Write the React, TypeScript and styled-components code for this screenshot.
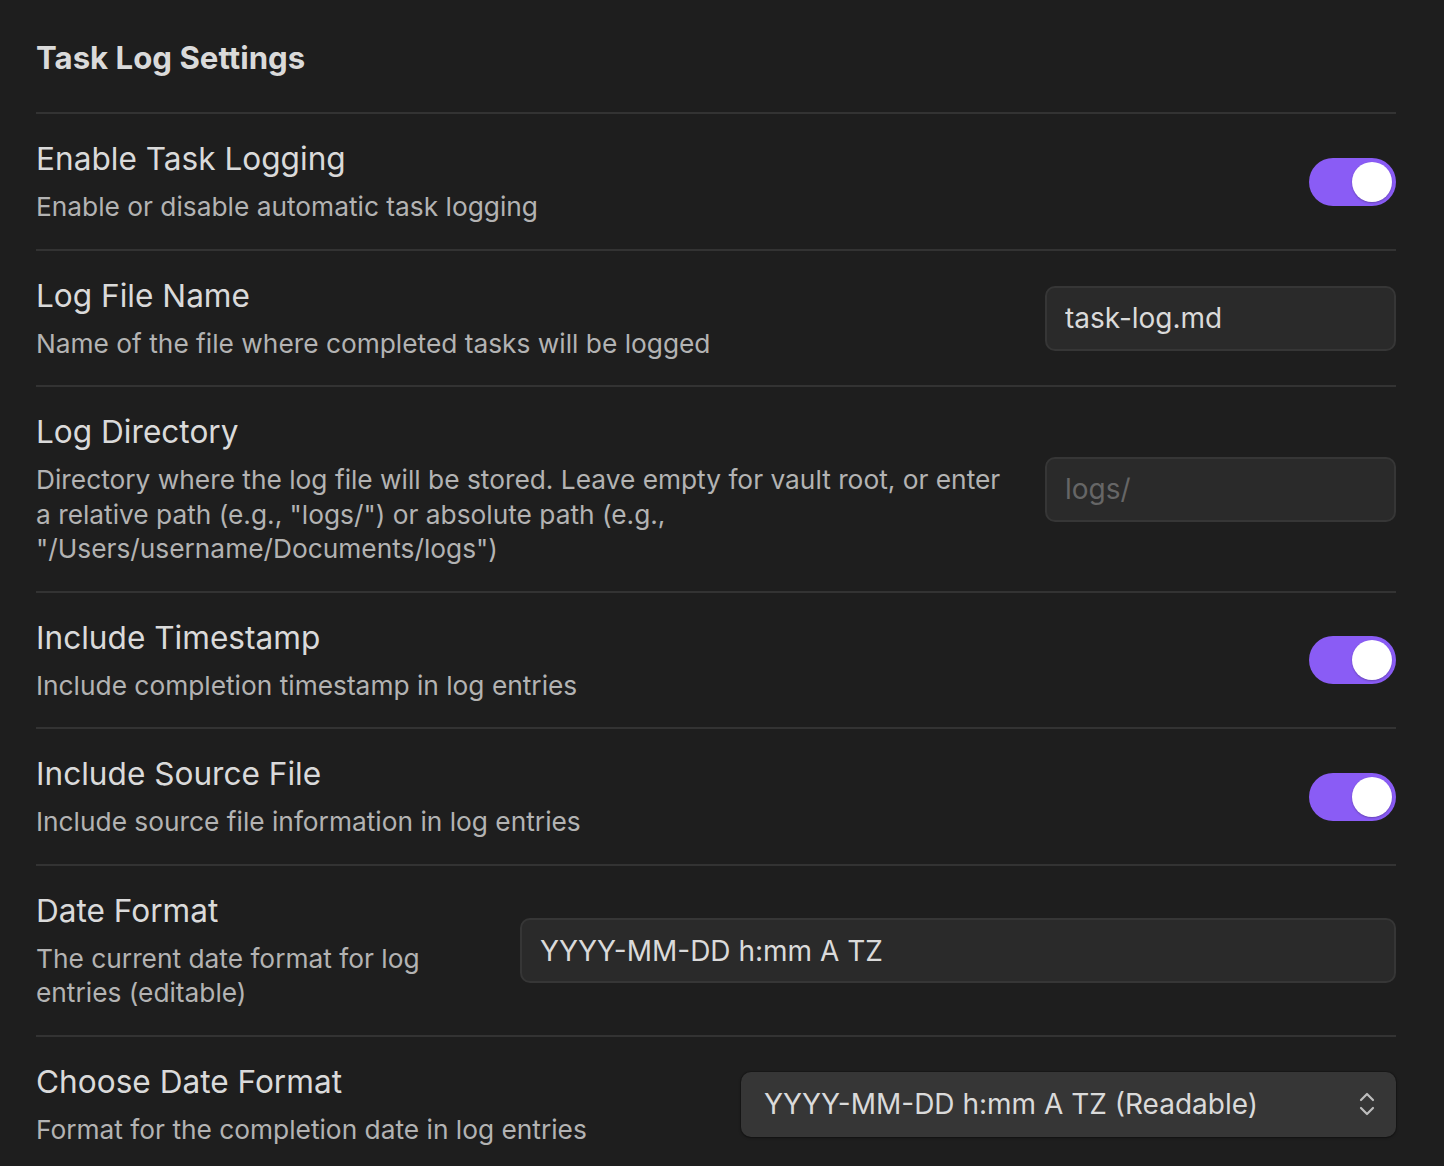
import React from "react";
import styled, { createGlobalStyle } from "styled-components";

const GlobalStyle = createGlobalStyle`
  html, body {
    margin: 0;
    padding: 0;
    background: #1e1e1e;
  }
  body {
    font-family: Inter, "Noto Sans", "Liberation Sans", sans-serif;
    -webkit-font-smoothing: antialiased;
  }
`;

const Page = styled.div`
  background: #1e1e1e;
  min-height: 1166px;
  padding: 38px 48px 0 36px;
  box-sizing: border-box;
`;

const Title = styled.h3`
  margin: 0 0 34px 0;
  font-size: 31.2px;
  line-height: 40px;
  font-weight: 700;
  color: #dadada;
`;

const Row = styled.div`
  display: flex;
  align-items: center;
  gap: 32px;
  border-top: 2px solid #333333;
  padding: 25px 0 24px 0;
`;

const Info = styled.div`
  flex: 1 1 auto;
  min-width: 0;
`;

const Name = styled.div`
  font-size: 31.6px;
  line-height: 40px;
  color: #dadada;
  font-weight: 400;
`;

const Desc = styled.div`
  margin-top: 11px;
  font-size: 26.3px;
  line-height: 34.5px;
  color: #b3b3b3;
`;

const Control = styled.div<{ $width?: number }>`
  flex: 0 0 ${(p) => (p.$width ? `${p.$width}px` : "auto")};
  display: flex;
  justify-content: flex-end;
  align-items: center;
`;

const Toggle = styled.div<{ $on: boolean }>`
  position: relative;
  width: 87px;
  height: 48px;
  border-radius: 24px;
  background: ${(p) => (p.$on ? "#8a5cf5" : "#3f3f3f")};
  box-sizing: border-box;
`;

const Knob = styled.div<{ $on: boolean }>`
  position: absolute;
  top: 4px;
  ${(p) => (p.$on ? "right: 4px;" : "left: 4px;")}
  width: 40px;
  height: 40px;
  border-radius: 50%;
  background: #ffffff;
  box-shadow: 0 1px 2px rgba(0, 0, 0, 0.25);
`;

const TextInput = styled.input`
  width: 100%;
  height: 65px;
  box-sizing: border-box;
  background: #2a2a2a;
  border: 2px solid #363636;
  border-radius: 10px;
  padding: 0 18px;
  font-family: Inter, "Noto Sans", "Liberation Sans", sans-serif;
  font-size: 28px;
  color: #dadada;
  outline: none;
  &::placeholder {
    color: #666666;
  }
`;

const SelectBox = styled.div`
  width: 100%;
  height: 65px;
  box-sizing: border-box;
  background: #363636;
  border-radius: 10px;
  box-shadow: 0 1px 3px rgba(0, 0, 0, 0.35), 0 0 0 1px rgba(0, 0, 0, 0.15);
  padding: 0 20px 0 23px;
  display: flex;
  align-items: center;
  justify-content: space-between;
  font-size: 28px;
  color: #dadada;
`;

const Chevrons = () => (
  <svg width="18" height="26" viewBox="0 0 18 26" fill="none" stroke="#bdbdbd" strokeWidth="2.2" strokeLinecap="round" strokeLinejoin="round">
    <path d="M3 9 L9 3 L15 9" />
    <path d="M3 17 L9 23 L15 17" />
  </svg>
);

type Setting = {
  name: string;
  desc: string;
  control: React.ReactNode;
  width?: number;
};

const settings: Setting[] = [
  {
    name: "Enable Task Logging",
    desc: "Enable or disable automatic task logging",
    control: (
      <Toggle $on>
        <Knob $on />
      </Toggle>
    ),
  },
  {
    name: "Log File Name",
    desc: "Name of the file where completed tasks will be logged",
    control: <TextInput defaultValue="task-log.md" />,
    width: 351,
  },
  {
    name: "Log Directory",
    desc:
      'Directory where the log file will be stored. Leave empty for vault root, or enter a relative path (e.g., "logs/") or absolute path (e.g., "/Users/username/Documents/logs")',
    control: <TextInput placeholder="logs/" />,
    width: 351,
  },
  {
    name: "Include Timestamp",
    desc: "Include completion timestamp in log entries",
    control: (
      <Toggle $on>
        <Knob $on />
      </Toggle>
    ),
  },
  {
    name: "Include Source File",
    desc: "Include source file information in log entries",
    control: (
      <Toggle $on>
        <Knob $on />
      </Toggle>
    ),
  },
  {
    name: "Date Format",
    desc: "The current date format for log entries (editable)",
    control: <TextInput defaultValue="YYYY-MM-DD h:mm A TZ" />,
    width: 876,
  },
  {
    name: "Choose Date Format",
    desc: "Format for the completion date in log entries",
    control: (
      <SelectBox>
        <span>YYYY-MM-DD h:mm A TZ (Readable)</span>
        <Chevrons />
      </SelectBox>
    ),
    width: 655,
  },
];

export default function App() {
  return (
    <>
      <GlobalStyle />
      <Page>
        <Title>Task Log Settings</Title>
        {settings.map((s) => (
          <Row key={s.name}>
            <Info>
              <Name>{s.name}</Name>
              <Desc>{s.desc}</Desc>
            </Info>
            <Control $width={s.width}>{s.control}</Control>
          </Row>
        ))}
      </Page>
    </>
  );
}
